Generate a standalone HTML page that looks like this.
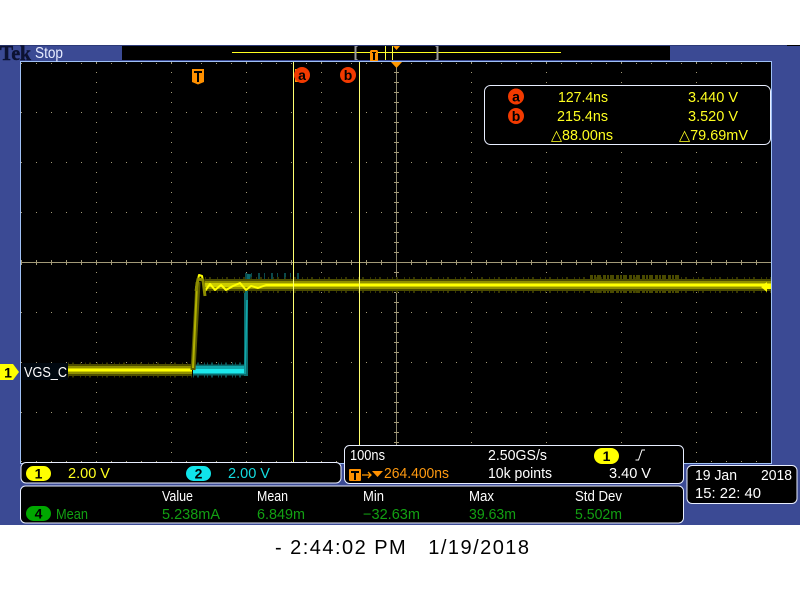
<!DOCTYPE html>
<html><head><meta charset="utf-8"><style>
html,body{margin:0;padding:0;background:#fff;width:800px;height:600px;overflow:hidden}
svg{display:block}
text{font-family:"Liberation Sans",sans-serif;font-size:14.5px;white-space:pre}
</style></head><body>
<svg width="800" height="600" viewBox="0 0 800 600" xmlns="http://www.w3.org/2000/svg">
<rect width="800" height="600" fill="#fff"/>
<rect x="0" y="45" width="800" height="480" fill="#3b4a94"/>
<rect x="0" y="45" width="787" height="1" fill="#2c3a78"/>
<rect x="787" y="45" width="13" height="1" fill="#000"/>
<rect x="122" y="46" width="548" height="14" fill="#000"/>
<rect x="20.500" y="61.500" width="751" height="402" fill="#000" stroke="#9fc0f5"/>
<text x="0" y="60" style="font-family:'Liberation Serif',serif;font-weight:bold;font-size:21px" fill="#0c1232" stroke="#0c1232" stroke-width=".5" textLength="31" lengthAdjust="spacingAndGlyphs">Tek</text>
<text x="35" y="58" style="font-size:16px" fill="#e8ecff" textLength="28" lengthAdjust="spacingAndGlyphs">Stop</text>
<!-- record view -->
<rect x="232" y="52" width="329" height="1" fill="#ffff20"/>
<rect x="354.500" y="46" width="2" height="14" fill="#999"/><rect x="354.500" y="46" width="3" height="1" fill="#999"/><rect x="354.500" y="59" width="3" height="1" fill="#999"/>
<rect x="436.500" y="46" width="2" height="14" fill="#999"/><rect x="435.500" y="46" width="3" height="1" fill="#999"/><rect x="435.500" y="59" width="3" height="1" fill="#999"/>
<rect x="385" y="46" width="1" height="14" fill="#ffff40"/>
<rect x="392" y="46" width="1" height="14" fill="#ffff40"/>
<path d="M370 51l1-1h6l1 1v10h-8z" fill="#ff9000"/><path d="M372 52h4v1h-1v7h-2v-7h-1z" fill="#000"/>
<path d="M393 46h7l-3.500 4z" fill="#ff9800"/>
<!-- graticule -->
<g stroke="#a39a78" stroke-width="1" fill="none">
<path stroke-dasharray="1 14" d="M21 63.500H771M21 112.500H771M21 162.500H771M21 212.500H771M21 312.500H771M21 362.500H771M21 412.500H771M21 461.500H771"/>
<path stroke-dasharray="1 9" d="M96.500 62V462M171.500 62V462M246.500 62V462M321.500 62V462M471.500 62V462M546.500 62V462M621.500 62V462M696.500 62V462"/>
<path stroke-dasharray="1 14" stroke-width="5" d="M21 262.500H771"/>
<path d="M21 262.500H771"/>
<path d="M396.500 62V445" stroke="#8d8870"/>
<path stroke-dasharray="1 9" stroke-width="5" d="M396.500 62V445"/>
</g>
<!-- traces -->
<g fill="none" stroke-linejoin="round">
<path d="M247 290L249 274" stroke="#0b6a6c" stroke-width="4"/>
<path d="M245 276H300" stroke="#0b4a4c" stroke-width="6" stroke-dasharray="2 4 1 6"/>
<path d="M193 370H244" stroke="#0a4e50" stroke-width="15" stroke-dasharray="1 3 2 5 1 2"/>
<path d="M193 370H244" stroke="#0b6a6c" stroke-width="11"/>
<path d="M193 370H244" stroke="#10a8ac" stroke-width="8"/>
<path d="M193 371H244" stroke="#1ce8ec" stroke-width="4"/>
<path d="M246 376L246 282" stroke="#0c6c6e" stroke-width="4"/>
<path d="M245 374L247 300" stroke="#12a8ac" stroke-width="1.500"/>
<path d="M68 370H192" stroke="#343400" stroke-width="15" stroke-dasharray="1 3 2 6 1 4"/>
<path d="M68 370H192" stroke="#4c4c00" stroke-width="12"/>
<path d="M68 370H192" stroke="#8f8f00" stroke-width="8"/>
<path d="M68 370H192" stroke="#cccc00" stroke-width="4"/>
<path d="M68 370H192" stroke="#ffff00" stroke-width="2"/>
<path d="M193 370L198 282" stroke="#5a5a00" stroke-width="5"/>
<path d="M193 368L197 285" stroke="#b0b000" stroke-width="2"/>
<path d="M205 285H771" stroke="#343400" stroke-width="16" stroke-dasharray="1 3 2 6 1 4"/>
<path d="M205 285H771" stroke="#4c4c00" stroke-width="12"/>
<path d="M590 284H680" stroke="#4a4a00" stroke-width="18" stroke-dasharray="3 1 2 1 4 2"/>
<path d="M205 285H771" stroke="#8f8f00" stroke-width="8"/>
<path d="M205 285H771" stroke="#cccc00" stroke-width="4"/>
<path d="M196 288L199 275L202 276L205 291L210 284L215 290L221 285L226 290L233 286L240 283L246 290L251 286L258 288L266 285H771" stroke="#ffff00" stroke-width="2"/>
<path d="M196 291L198 279L203 280L205 296" stroke="#8c8c00" stroke-width="3"/>
</g>
<path d="M761 287l6-5v3h4v4h-4v3z" fill="#ffff00"/>
<!-- cursors -->
<rect x="293" y="62" width="1" height="400" fill="#ffff70"/>
<rect x="359" y="62" width="1" height="383" fill="#ffff70"/>
<!-- top markers -->
<path d="M192 69h12v13l-6 2.500-6-2.500z" fill="#ff9000"/><path d="M194 71h8v2h-3v9h-2v-9h-3z" fill="#000"/>
<rect x="295" y="69" width="6" height="13" fill="#ff9000"/>
<circle cx="302" cy="75" r="8" fill="#f23a00"/>
<text x="302" y="80" text-anchor="middle" style="font-weight:bold;font-size:14px" fill="#000">a</text>
<circle cx="348" cy="75" r="8" fill="#f23a00"/>
<text x="348" y="80" text-anchor="middle" style="font-weight:bold;font-size:14px" fill="#000">b</text>
<path d="M391 62h11l-5.500 6z" fill="#ff9800"/>
<!-- cursor box -->
<rect x="484.500" y="85.500" width="286" height="59" rx="6" fill="#000" stroke="#e8eeff"/>
<circle cx="516" cy="96.500" r="8" fill="#f23a00"/>
<text x="516" y="101.500" text-anchor="middle" style="font-weight:bold;font-size:14px" fill="#000">a</text>
<circle cx="516" cy="116" r="8" fill="#f23a00"/>
<text x="516" y="121" text-anchor="middle" style="font-weight:bold;font-size:14px" fill="#000">b</text>
<g fill="#ffff20">
<text x="558" y="102" textLength="50" lengthAdjust="spacingAndGlyphs">127.4ns</text>
<text x="688" y="102" textLength="50" lengthAdjust="spacingAndGlyphs">3.440 V</text>
<text x="557" y="121" textLength="51" lengthAdjust="spacingAndGlyphs">215.4ns</text>
<text x="688" y="121" textLength="50" lengthAdjust="spacingAndGlyphs">3.520 V</text>
<text x="551" y="140" textLength="62" lengthAdjust="spacingAndGlyphs">△88.00ns</text>
<text x="679" y="140" textLength="69" lengthAdjust="spacingAndGlyphs">△79.69mV</text>
</g>
<!-- VGS label -->
<rect x="22" y="363" width="46" height="17" fill="#000810"/>
<text x="24" y="377" fill="#fff" textLength="43" lengthAdjust="spacingAndGlyphs">VGS_C</text>
<path d="M0 364h13l6 8-6 8H0z" fill="#ffff00"/>
<text x="8" y="377.500" text-anchor="middle" style="font-weight:bold;font-size:14px" fill="#000">1</text>
<!-- channel box -->
<rect x="21" y="462.500" width="320" height="20.500" rx="5" fill="#000" stroke="#e8eeff"/>
<rect x="26" y="466" width="25" height="15" rx="7.500" fill="#ffff00"/>
<text x="38.500" y="478.500" text-anchor="middle" style="font-weight:bold;font-size:14px" fill="#000">1</text>
<text x="68" y="478" fill="#ffff20" textLength="42" lengthAdjust="spacingAndGlyphs">2.00 V</text>
<rect x="186" y="466" width="25" height="15" rx="7.500" fill="#10e4ea"/>
<text x="198.500" y="478.500" text-anchor="middle" style="font-weight:bold;font-size:14px" fill="#000">2</text>
<text x="228" y="478" fill="#14dce0" textLength="42" lengthAdjust="spacingAndGlyphs">2.00 V</text>
<!-- measurement box -->
<rect x="20.500" y="486" width="663" height="37" rx="5" fill="#000" stroke="#e8eeff"/>
<rect x="26" y="506" width="25" height="15" rx="7.500" fill="#00a800"/>
<text x="38.500" y="518.500" text-anchor="middle" style="font-weight:bold;font-size:14px" fill="#000">4</text>
<g fill="#fff">
<text x="162" y="501" textLength="31" lengthAdjust="spacingAndGlyphs">Value</text>
<text x="257" y="501" textLength="31" lengthAdjust="spacingAndGlyphs">Mean</text>
<text x="363" y="501" textLength="21" lengthAdjust="spacingAndGlyphs">Min</text>
<text x="469" y="501" textLength="25" lengthAdjust="spacingAndGlyphs">Max</text>
<text x="575" y="501" textLength="47" lengthAdjust="spacingAndGlyphs">Std Dev</text>
</g>
<g fill="#12a012">
<text x="56" y="519" textLength="32" lengthAdjust="spacingAndGlyphs">Mean</text>
<text x="162" y="519" textLength="58" lengthAdjust="spacingAndGlyphs">5.238mA</text>
<text x="257" y="519" textLength="48" lengthAdjust="spacingAndGlyphs">6.849m</text>
<text x="363" y="519" textLength="57" lengthAdjust="spacingAndGlyphs">−32.63m</text>
<text x="469" y="519" textLength="47" lengthAdjust="spacingAndGlyphs">39.63m</text>
<text x="575" y="519" textLength="47" lengthAdjust="spacingAndGlyphs">5.502m</text>
</g>
<!-- trigger box -->
<rect x="344.500" y="445.500" width="339" height="38" rx="5" fill="#000" stroke="#e8eeff"/>
<g fill="#fff">
<text x="350" y="460" textLength="35" lengthAdjust="spacingAndGlyphs">100ns</text>
<text x="488" y="460" textLength="59" lengthAdjust="spacingAndGlyphs">2.50GS/s</text>
<text x="488" y="478" textLength="64" lengthAdjust="spacingAndGlyphs">10k points</text>
<text x="609" y="478" textLength="42" lengthAdjust="spacingAndGlyphs">3.40 V</text>
</g>
<rect x="594" y="448" width="25" height="16" rx="8" fill="#ffff00"/>
<text x="606.500" y="461" text-anchor="middle" style="font-weight:bold;font-size:14px" fill="#000">1</text>
<path d="M635.500 460h3l3.500-10h3" fill="none" stroke="#fff"/>
<rect x="349" y="469" width="12" height="12" rx="1" fill="#ff9000"/><path d="M351 471h8v2h-3v7h-2v-7h-3z" fill="#000"/>
<path d="M362 475h9M368 472l3 3-3 3" fill="none" stroke="#ff9800" stroke-width="1.300"/>
<path d="M372 471h11l-5.500 6z" fill="#ff9000"/>
<text x="384" y="478" fill="#ff9a10" textLength="65" lengthAdjust="spacingAndGlyphs">264.400ns</text>
<!-- date box -->
<rect x="687" y="465.500" width="110" height="38" rx="5" fill="#000" stroke="#e8eeff"/>
<g fill="#fff">
<text x="695" y="480" textLength="42" lengthAdjust="spacingAndGlyphs">19 Jan</text>
<text x="761" y="480" textLength="31" lengthAdjust="spacingAndGlyphs">2018</text>
<text x="695" y="498" textLength="66" lengthAdjust="spacingAndGlyphs">15: 22: 40</text>
</g>
<!-- caption -->
<text x="275" y="554" style="font-size:20px" fill="#000" textLength="254" lengthAdjust="spacing">- 2:44:02 PM   1/19/2018</text>
</svg>
</body></html>
